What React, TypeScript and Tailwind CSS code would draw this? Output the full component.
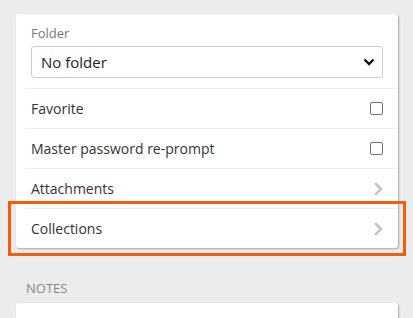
import { ReactNode } from 'react';

function Checkbox() {
  return <div className="h-[13px] w-[13px] rounded-[2px] border border-[#767676] bg-white" />;
}

function Chevron() {
  return (
    <svg width="9" height="14" viewBox="0 0 9 14" fill="none">
      <path d="M2 2l5 5-5 5" stroke="#c4c4c4" strokeWidth="2.6" strokeLinecap="square" />
    </svg>
  );
}

function Row({ label, right }: { label: string; right: ReactNode }) {
  return (
    <div className="flex h-10 items-center justify-between border-t border-[#efefef] pl-[5px] pr-[15px]">
      <span className="text-[14px] text-[#333]">{label}</span>
      {right}
    </div>
  );
}

export default function App() {
  return (
    <div
      className="relative h-[318px] w-[413px] overflow-hidden bg-[#ececec] pl-4 pr-[15px] pt-[14px]"
      style={{ fontFamily: '"Open Sans", "Liberation Sans", sans-serif' }}
    >
      <div className="rounded-[3px] bg-white pl-[10px] shadow-[1px_1px_2px_rgba(0,0,0,0.3)]">
        <div className="pb-[10px] pl-[5px] pr-[15px] pt-[10px]">
          <div className="mb-[4px] text-[13px] leading-[18px] text-[#777]">Folder</div>
          <div className="flex h-8 items-center justify-between rounded-[3px] border border-[#cdcdcd] pl-[9px] pr-[7px]">
            <span className="text-[15px] text-[#222]">No folder</span>
            <svg width="12" height="8" viewBox="0 0 12 8" fill="none">
              <path d="M1.5 1.5l4.5 4.5 4.5-4.5" stroke="#111" strokeWidth="2.4" />
            </svg>
          </div>
        </div>
        <Row label="Favorite" right={<Checkbox />} />
        <Row label="Master password re-prompt" right={<Checkbox />} />
        <Row label="Attachments" right={<Chevron />} />
        <Row label="Collections" right={<Chevron />} />
      </div>

      <div className="mt-[31px] pl-[10px] text-[13px] leading-[18px] text-[#888]">NOTES</div>
      <div className="mt-[6px] h-10 rounded-[3px] bg-white shadow-[1px_1px_2px_rgba(0,0,0,0.3)]" />

      <div className="absolute left-[8px] top-[201px] h-[55px] w-[398px] border-[3px] border-[#f55d0a]" />
    </div>
  );
}
